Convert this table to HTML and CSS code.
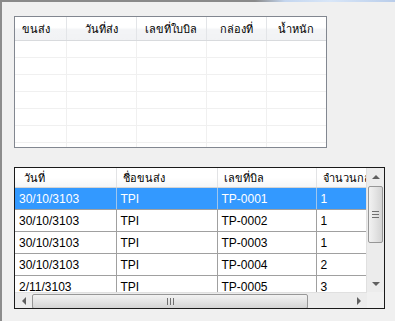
FILE: index.html
```html
<!DOCTYPE html>
<html lang="th">
<head>
    <meta charset="UTF-8">
    <title>รายการขนส่ง</title>
    <link rel="stylesheet" href="styles.css">
</head>
<body>

    <div class="glow"></div>

    <div class="frame">

        <!-- shipment summary (empty) -->
        <div class="grid grid-top">
            <table class="table-top">
                <colgroup>
                    <col style="width:51px">
                    <col style="width:70px">
                    <col style="width:70px">
                    <col style="width:60px">
                    <col style="width:60px">
                </colgroup>
                <thead>
                    <tr>
                        <th class="left">ขนส่ง</th>
                        <th>วันที่ส่ง</th>
                        <th>เลขที่ใบบิล</th>
                        <th>กล่องที่</th>
                        <th>น้ำหนัก</th>
                    </tr>
                </thead>
                <tbody id="emptyRows"></tbody>
            </table>
        </div>

        <!-- bill list -->
        <div class="grid grid-bottom">
            <div class="grid-main">
                <div class="viewport">
                    <table class="table-bills">
                        <colgroup>
                            <col style="width:101px">
                            <col style="width:101px">
                            <col style="width:99px">
                            <col style="width:100px">
                        </colgroup>
                        <thead>
                            <tr>
                                <th class="first">วันที่</th>
                                <th>ชื่อขนส่ง</th>
                                <th>เลขที่บิล</th>
                                <th>จำนวนกล่อง</th>
                            </tr>
                        </thead>
                        <tbody id="billRows"></tbody>
                    </table>
                </div>
                <div class="vscroll">
                    <div class="arrow-btn"><span class="tri tri-up"></span></div>
                    <div class="vthumb"><span class="grip-h"></span></div>
                    <div class="vtrack"></div>
                    <div class="arrow-btn"><span class="tri tri-down"></span></div>
                </div>
            </div>
            <div class="hscroll-row">
                <div class="hscroll">
                    <div class="arrow-btn arrow-h"><span class="tri tri-left"></span></div>
                    <div class="hthumb"><span class="grip-v"></span></div>
                    <div class="htrack"></div>
                    <div class="arrow-btn arrow-h"><span class="tri tri-right"></span></div>
                </div>
                <div class="corner"></div>
            </div>
        </div>

    </div>

    <script>
        const bills = [
            { date: "30/10/3103", carrier: "TPI", bill: "TP-0001", boxes: 1 },
            { date: "30/10/3103", carrier: "TPI", bill: "TP-0002", boxes: 1 },
            { date: "30/10/3103", carrier: "TPI", bill: "TP-0003", boxes: 1 },
            { date: "30/10/3103", carrier: "TPI", bill: "TP-0004", boxes: 2 },
            { date: "2/11/3103", carrier: "TPI", bill: "TP-0005", boxes: 3 }
        ];

        const billRows = document.getElementById('billRows');
        bills.forEach((b, i) => {
            const tr = document.createElement('tr');
            if (i === 0) tr.className = 'selected';
            tr.innerHTML = `<td>${b.date}</td><td>${b.carrier}</td><td>${b.bill}</td><td>${b.boxes}</td>`;
            billRows.appendChild(tr);
        });

        // blank rows for the summary grid
        const emptyRows = document.getElementById('emptyRows');
        for (let i = 0; i < 7; i++) {
            emptyRows.innerHTML += '<tr><td></td><td></td><td></td><td></td><td></td></tr>';
        }
    </script>

</body>
</html>
```

FILE: styles.css
```css
body {
    margin: 0;
    background: #f0f0f0;
    font-family: 'Liberation Sans', Tahoma, sans-serif;
    width: 395px;
    height: 321px;
    overflow: hidden;
}

.glow {
    height: 2px;
    background: linear-gradient(to right, #8a8a8a 0, #8a8a8a 255px, #c4d6ef 285px, #d8e6f8 330px, #b9cdea 395px);
}

.frame {
    border-left: 2px solid #8c8c8c;
    padding: 14px 0 0 12px;
    height: 305px;
}

.grid {
    background: white;
    overflow: hidden;
}

/* top grid */
.grid-top {
    width: 311px;
    height: 130px;
    border: 1px solid #828790;
}

.table-top {
    border-collapse: collapse;
    table-layout: fixed;
    width: 311px;
}

.table-top th {
    height: 23px;
    padding: 0;
    font-weight: normal;
    font-size: 11px;
    color: #000;
    text-align: center;
    background: linear-gradient(#ffffff 0, #ffffff 45%, #f3f4f6 55%, #f1f2f4 100%);
    border-right: 1px solid #e3e5e8;
    border-bottom: 1px solid #d8dadd;
}

    .table-top th.left {
        text-align: left;
        padding-left: 7px;
    }

.table-top td {
    height: 16px;
    padding: 0;
    border-right: 1px solid #f0f0f0;
    border-bottom: 1px solid #f0f0f0;
}

/* bottom grid */
.grid-bottom {
    margin-top: 19px;
    width: 369px;
    height: 140px;
    border: 1px solid #1a1a1a;
}

.grid-main {
    display: flex;
    height: 124px;
}

.viewport {
    width: 352px;
    overflow: hidden;
}

.table-bills {
    border-collapse: collapse;
    table-layout: fixed;
    width: 401px;
}

.table-bills th {
    height: 19px;
    padding: 0 0 0 6px;
    text-align: left;
    font-weight: normal;
    font-size: 11px;
    white-space: nowrap;
    overflow: hidden;
    background: linear-gradient(#ffffff 0, #ffffff 50%, #f5f6f7 100%);
    border-right: 1px solid #e2e3e5;
    border-bottom: 1px solid #d5d5d5;
}

    .table-bills th.first {
        padding-left: 9px;
    }

.table-bills td {
    height: 21px;
    padding: 0 0 0 4px;
    font-size: 12px;
    color: #000;
    white-space: nowrap;
    border-right: 1px solid #a0a0a0;
    border-bottom: 1px solid #a0a0a0;
}

.table-bills tr.selected td {
    background: #3399ff;
    color: white;
    border-right-color: #9ec6ee;
}

/* scrollbars */
.vscroll {
    width: 17px;
    display: flex;
    flex-direction: column;
    background: #ececec;
    border-left: 1px solid #e0e0e0;
}

.arrow-btn {
    height: 17px;
    display: flex;
    align-items: center;
    justify-content: center;
    flex-shrink: 0;
}

.arrow-h {
    width: 17px;
    height: 16px;
}

.tri {
    width: 0;
    height: 0;
    border: 4px solid transparent;
}

.tri-up {
    border-bottom: 4px solid #606060;
    border-top-width: 0;
}

.tri-down {
    border-top: 4px solid #606060;
    border-bottom-width: 0;
}

.tri-left {
    border-right: 4px solid #606060;
    border-left-width: 0;
}

.tri-right {
    border-left: 4px solid #606060;
    border-right-width: 0;
}

.vthumb {
    margin: 1px 1px 0 1px;
    height: 55px;
    border: 1px solid #979797;
    border-radius: 2px;
    background: linear-gradient(to right, #f2f2f2, #e4e4e4 50%, #d4d4d4);
    display: flex;
    align-items: center;
    justify-content: center;
}

.grip-h {
    width: 7px;
    height: 5px;
    border-top: 1px solid #6f6f6f;
    border-bottom: 1px solid #6f6f6f;
    background: linear-gradient(transparent 2px, #6f6f6f 2px, #6f6f6f 3px, transparent 3px);
}

.vtrack {
    flex: 1;
}

.hscroll-row {
    display: flex;
    height: 16px;
}

.hscroll {
    width: 352px;
    display: flex;
    background: #ececec;
    border-top: 1px solid #e0e0e0;
}

.hthumb {
    margin: 1px 0 0 0;
    width: 274px;
    height: 13px;
    border: 1px solid #979797;
    border-radius: 2px;
    background: linear-gradient(#f2f2f2, #e4e4e4 50%, #d4d4d4);
    display: flex;
    align-items: center;
    justify-content: center;
}

.grip-v {
    width: 5px;
    height: 7px;
    border-left: 1px solid #6f6f6f;
    border-right: 1px solid #6f6f6f;
    background: linear-gradient(to right, transparent 2px, #6f6f6f 2px, #6f6f6f 3px, transparent 3px);
}

.htrack {
    flex: 1;
}

.corner {
    width: 17px;
    background: #f0f0f0;
}
```
